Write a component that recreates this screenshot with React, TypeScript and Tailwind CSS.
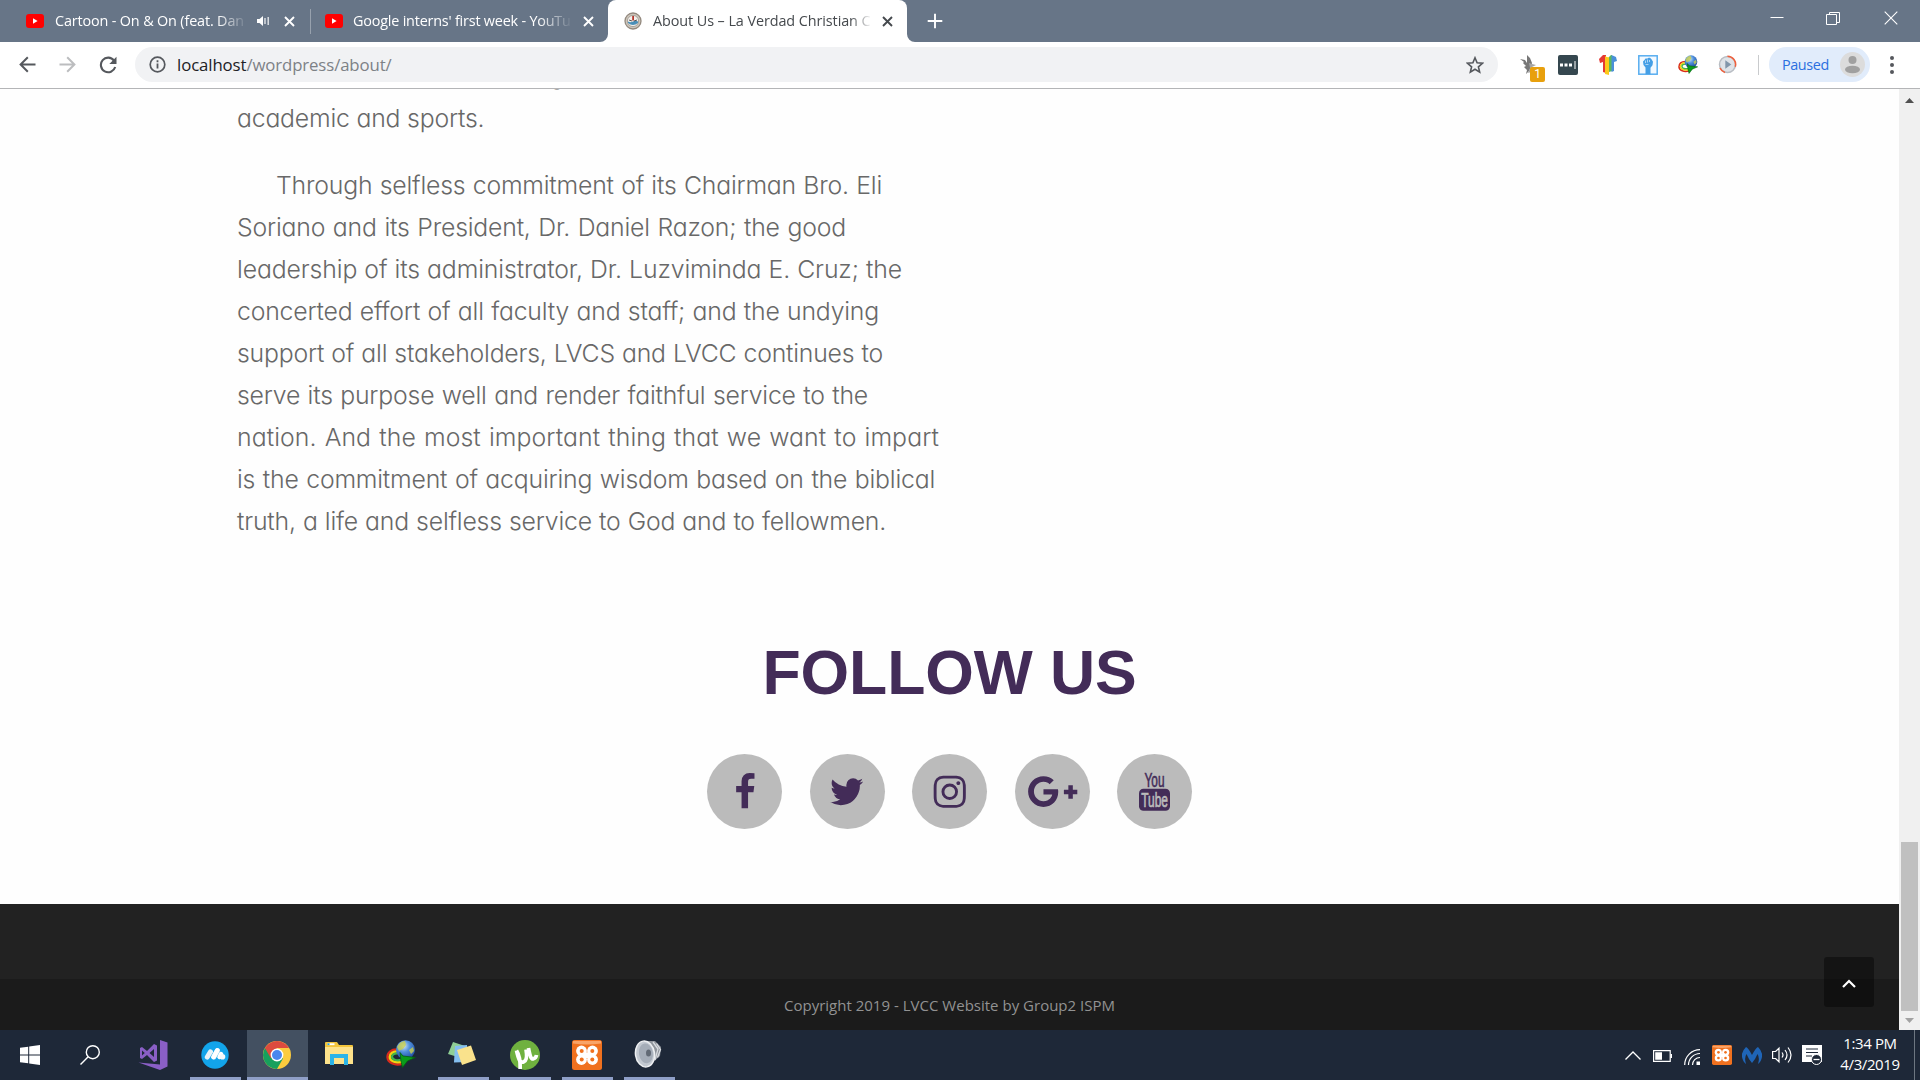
import React from "react";
import { FaGooglePlusG } from "react-icons/fa";

const UI = "font-['Open_Sans','Noto_Sans',sans-serif]";

const YouTubeMark = () => (
  <svg className="h-[14px] w-[18px] shrink-0" viewBox="0 0 18 14">
    <rect width="18" height="14" rx="3" fill="#f00" />
    <path d="M7 4.2v5.6L11.6 7z" fill="#fff" />
  </svg>
);

const TabClose = ({ className }: { className: string }) => (
  <svg className={`h-[11px] w-[11px] shrink-0 ${className}`} viewBox="0 0 11 11">
    <path d="M1 1l9 9M10 1l-9 9" stroke="currentColor" strokeWidth="1.9" />
  </svg>
);

function TabStrip() {
  return (
    <div className={`flex h-[42px] bg-[#677587] text-[14.4px] ${UI}`}>
      <div className="flex h-[42px] w-[310px] items-center pl-[26px]">
        <YouTubeMark />
        <div className="ml-[11px] w-[193px] overflow-hidden whitespace-nowrap tracking-[-0.15px] text-white [mask-image:linear-gradient(to_right,#000_84%,transparent)]">
          Cartoon - On &amp; On (feat. Dan
        </div>
        <svg className="ml-[9px] h-[12px] w-[13px] shrink-0 text-white" viewBox="0 0 13 12">
          <path d="M0 4h2.5L6 1v10L2.5 8H0z" fill="currentColor" />
          <path d="M8 3v6M11.2 2v8" stroke="currentColor" strokeWidth="1.4" opacity=".8" />
        </svg>
        <TabClose className="ml-[14px] text-white" />
      </div>
      <div className="mt-[9px] h-[25px] w-px bg-[#97a1ad]" />
      <div className="flex h-[42px] w-[297px] items-center pl-[14px]">
        <YouTubeMark />
        <div className="ml-[10px] w-[220px] overflow-hidden whitespace-nowrap tracking-[-0.2px] text-white [mask-image:linear-gradient(to_right,#000_84%,transparent)]">
          Google interns&#39; first week - YouTu
        </div>
        <TabClose className="ml-[10px] text-white" />
      </div>
      <div className="relative flex h-[42px] w-[299px] rounded-t-[8px] bg-white">
        <svg className="absolute -left-[8px] bottom-0 h-[8px] w-[8px]" viewBox="0 0 8 8">
          <path d="M8 0v8H0a8 8 0 0 0 8-8z" fill="#fff" />
        </svg>
        <svg className="absolute -right-[8px] bottom-0 h-[8px] w-[8px]" viewBox="0 0 8 8">
          <path d="M0 0v8h8a8 8 0 0 1-8-8z" fill="#fff" />
        </svg>
        <div className="flex h-[42px] items-center pl-[16px]">
          <svg className="h-[18px] w-[18px] shrink-0" viewBox="0 0 18 18">
            <circle cx="9" cy="9" r="8" fill="#cdc6bc" stroke="#93897e" strokeWidth="1.300" />
            <circle cx="9" cy="9" r="5.600" fill="#f3f0ec" stroke="#9a948c" strokeWidth=".8" />
            <path d="M4 9.500q2.500 1.500 5 0t5 0v1.500q-5 4-10 0z" fill="#4a8fb8" />
            <path d="M8.200 4h1.800v4.500H8.200z" fill="#b5372e" />
            <path d="M5 8l3 1M13 8l-3 1" stroke="#555" />
          </svg>
          <div className="ml-[11px] w-[219px] overflow-hidden whitespace-nowrap tracking-[-0.08px] text-[#45494d] [mask-image:linear-gradient(to_right,#000_90%,transparent)]">
            About Us – La Verdad Christian C
          </div>
          <TabClose className="ml-[10px] text-[#45494d]" />
        </div>
      </div>
      <svg className="ml-[20px] mt-[13px] h-[16px] w-[16px] text-white" viewBox="0 0 16 16">
        <path d="M8 .7v14.600M.7 8h14.600" stroke="currentColor" strokeWidth="1.900" />
      </svg>
      <div className="ml-auto flex pt-[11px] pr-[22px] text-white">
        <svg className="h-[14px] w-[14px]" viewBox="0 0 14 14">
          <path d="M.5 6.500h13" stroke="currentColor" />
        </svg>
        <svg className="ml-[42px] h-[14px] w-[14px]" viewBox="0 0 14 14">
          <path d="M.5 3.500h10v10H.5zM3.500 3V1.500h10v10h-3" fill="none" stroke="currentColor" />
        </svg>
        <svg className="ml-[44px] h-[14px] w-[14px]" viewBox="0 0 14 14">
          <path d="M.7 .7l12.600 12.600M13.300 .7L.7 13.300" stroke="currentColor" strokeWidth="1.100" />
        </svg>
      </div>
    </div>
  );
}

const IdmIcon = ({ className }: { className: string }) => (
  <svg className={className} viewBox="0 0 30 28">
    <defs>
      <radialGradient id="globe" cx=".4" cy=".3" r=".8">
        <stop offset="0" stopColor="#cfe4f5" />
        <stop offset=".4" stopColor="#4f8fdb" />
        <stop offset="1" stopColor="#173f94" />
      </radialGradient>
    </defs>
    <path d="M12 9.500C5 9 1.200 13 1.500 17.500 2 23 9 26 17 23.500" fill="none" stroke="#d92a1c" strokeWidth="2.400" />
    <path d="M12 11.500C6.500 11 3.500 14 3.700 17 4 21.500 10 23.500 17 21.300" fill="none" stroke="#f5d312" strokeWidth="2.400" />
    <path d="M12 13.500C8 13 5.800 15 6 17c.5 3 5 4.300 10 2.500" fill="none" stroke="#43b649" strokeWidth="2.200" />
    <circle cx="19.500" cy="9.800" r="9.500" fill="url(#globe)" />
    <path d="M11 7q3-6 8-6l1 4-3 4-4 2zM23 10l4-3 1 4-3 3z" fill="#c9cf4e" opacity=".8" />
    <path d="M14 12.500l3 3.500 12.500 1.500-8 3.500-5 6.500-1.500-6z" fill="#0a9c1b" stroke="#075c10" strokeWidth=".8" />
  </svg>
);

function Toolbar() {
  return (
    <div className="flex h-[47px] items-start border-b border-[#b4b5b7] bg-white pt-[5px]">
      <div className="flex h-[35px] items-center pl-[19px]">
        <svg className="h-[17px] w-[17px]" viewBox="0 0 17 17" fill="none" stroke="#55585d" strokeWidth="2">
          <path d="M16.500 8.500H2M8.800 1.300L1.600 8.500l7.200 7.200" />
        </svg>
        <svg className="ml-[23px] h-[17px] w-[17px]" viewBox="0 0 17 17" fill="none" stroke="#bcbdbf" strokeWidth="2">
          <path d="M.5 8.500H15M8.200 1.300l7.200 7.200-7.200 7.200" />
        </svg>
        <svg className="ml-[23px] h-[18px] w-[18px]" viewBox="0 0 18 18">
          <path d="M15 4.500A7.300 7.300 0 1 0 16.200 11" fill="none" stroke="#55585d" strokeWidth="2.100" />
          <path d="M17.500 .8v7.200h-7.200z" fill="#55585d" />
        </svg>
      </div>
      <div className={`ml-[18px] flex h-[35px] w-[1363px] items-center rounded-full bg-[#f1f2f4] pl-[14px] pr-[14px] text-[16.8px] ${UI}`}>
        <svg className="h-[17px] w-[17px]" viewBox="0 0 17 17">
          <circle cx="8.500" cy="8.500" r="7.300" fill="none" stroke="#55585d" strokeWidth="1.700" />
          <path d="M7.600 7.600h1.800v5H7.600zM7.600 4.300h1.800v1.900H7.600z" fill="#55585d" />
        </svg>
        <span className="ml-[11px] tracking-[-0.1px] text-[#202124]">localhost</span>
        <span className="tracking-[-0.12px] text-[#7d8186]">/wordpress/about/</span>
        <svg className="ml-auto h-[18px] w-[18px]" viewBox="0 0 18 18">
          <path d="M9 1.800l2.100 5 5.400.45-4.100 3.550 1.250 5.300L9 13.300l-4.650 2.800 1.250-5.300L1.500 7.250l5.400-.45z" fill="none" stroke="#55585d" strokeWidth="1.600" />
        </svg>
      </div>
      <div className="flex h-[35px] items-center pl-[22px]">
        <div className="relative h-[20px] w-[26px]">
          <svg className="h-[20px] w-[20px]" viewBox="0 0 20 20">
            <path d="M0 4l5 1 2 3V0l3 3 2 5-1 4-2 4-3 3 1-4-3-3 2-1-3-3 1-1z" fill="#777" />
            <path d="M9 8l3 1 4 1-4 2-1 5-3 1 2-5z" fill="#a5a5a5" />
          </svg>
          <div className="absolute left-[10px] top-[12px] flex h-[15px] w-[15px] items-center justify-center rounded-[2px] bg-[#e8a00d] font-['Roboto',sans-serif] text-[12px] text-white">
            1
          </div>
        </div>
        <svg className="ml-[12px] h-[20px] w-[20px]" viewBox="0 0 20 20">
          <rect width="20" height="20" rx="2" fill="#35474f" />
          <path d="M2 8.500h3v3H2zM6.500 8.500h3v3h-3zM11 8.500h3v3h-3zM16.500 6h1v8h-1z" fill="#fff" />
        </svg>
        <svg className="ml-[21px] h-[20px] w-[18px]" viewBox="0 0 18 20">
          <path d="M4 0h3v18l-3-1V7L1 8 0 4z" fill="#e53935" />
          <path d="M6 1q3 2 4 1v18l-4-1z" fill="#fdc91b" />
          <path d="M10 2l2-2h1v16l-3 1z" fill="#5cb85c" />
          <path d="M12.500 0L17 2l1 4-3 1v9l-2.500 1z" fill="#4a90d9" />
        </svg>
        <svg className="ml-[21px] h-[20px] w-[20px]" viewBox="0 0 20 20">
          <rect x=".8" y=".8" width="18.400" height="18.400" fill="#f2f9ff" stroke="#58aef0" strokeWidth="1.500" />
          <path d="M5 6.500l1.500-1.500 1-1.500h2l1-.8h1.500l1.500 1.500 1.500 2.500-.5 3.500-2 2.500v6.500H7.500V12.500L5.500 10z" fill="#459fe6" />
          <path d="M7.500 5.500v2.500M9.500 4.500v3M11.500 5v2M7.500 9.500h3" fill="none" stroke="#d7ecfc" strokeWidth=".7" />
        </svg>
        <IdmIcon className="ml-[20px] h-[19px] w-[20px]" />
        <svg className="ml-[20px] h-[19px] w-[19px]" viewBox="0 0 19 19">
          <circle cx="9.500" cy="9.500" r="8" fill="#dfe3e8" stroke="#b9bec4" strokeWidth="1.500" />
          <path d="M9.500 1.200a8.300 8.300 0 0 1 7.800 10.500M2 13a8.300 8.300 0 0 0 5 4.500" fill="none" stroke="#f0603c" strokeWidth="1.500" />
          <path d="M7.300 5.300v8.400l6-4.200z" fill="#8296aa" />
        </svg>
        <div className="ml-[21px] h-[20px] w-px bg-[#c9cbcd]" />
      </div>
      <div className={`ml-[10px] flex h-[35px] w-[101px] items-center justify-between rounded-full bg-[#e1ecfb] pl-[13px] pr-[5px] text-[14.4px] text-[#2b6fe0] ${UI}`}>
        <span className="tracking-[-0.4px]">Paused</span>
        <svg className="h-[25px] w-[25px]" viewBox="0 0 25 25">
          <circle cx="12.500" cy="12.500" r="12.500" fill="#dcdcdc" />
          <circle cx="12.500" cy="8" r="4" fill="#a0a0a0" />
          <ellipse cx="12.500" cy="17.500" rx="7.500" ry="3.800" fill="#a0a0a0" />
        </svg>
      </div>
      <div className="ml-[20px] mt-[9px] flex flex-col gap-[3px]">
        <i className="h-[4px] w-[4px] rounded-full bg-[#55585d]" />
        <i className="h-[4px] w-[4px] rounded-full bg-[#55585d]" />
        <i className="h-[4px] w-[4px] rounded-full bg-[#55585d]" />
      </div>
    </div>
  );
}

const LINE = "h-[42px] whitespace-nowrap [text-align-last:justify]";

function Article() {
  return (
    <div className="pl-[237px] font-['Inter','Lato',sans-serif] text-[24.8px] leading-[42px] font-light tracking-[-0.2px] text-[#686868] [font-feature-settings:'cv11']">
      <div className="-mt-[35px] flex h-[42px]">
        <span className="ml-[229px]">y</span>
        <span className="ml-[70px]">g</span>
      </div>
      <p className={`mt-[1px] w-[247px] ${LINE}`}>academic and sports.</p>
      <div className="mt-[25px]">
        <p className={`ml-[39px] w-[606px] ${LINE}`}>Through selfless commitment of its Chairman Bro. Eli</p>
        <p className={`w-[609px] ${LINE}`}>Soriano and its President, Dr. Daniel Razon; the good</p>
        <p className={`w-[665px] tracking-[-0.12px] ${LINE}`}>leadership of its administrator, Dr. Luzviminda E. Cruz; the</p>
        <p className={`w-[642px] ${LINE}`}>concerted effort of all faculty and staff; and the undying</p>
        <p className={`w-[646px] ${LINE}`}>support of all stakeholders, LVCS and LVCC continues to</p>
        <p className={`w-[631px] ${LINE}`}>serve its purpose well and render faithful service to the</p>
        <p className={`w-[702px] tracking-[0.08px] ${LINE}`}>nation. And the most important thing that we want to impart</p>
        <p className={`w-[698px] ${LINE}`}>is the commitment of acquiring wisdom based on the biblical</p>
        <p className={`w-[649px] ${LINE}`}>truth, a life and selfless service to God and to fellowmen.</p>
      </div>
    </div>
  );
}

const FacebookGlyph = () => (
  <svg className="h-[38px] w-[38px]" viewBox="0 0 1792 1792" fill="currentColor">
    <path d="M1343 12v264h-157q-86 0-116 36t-30 108v189h293l-39 296h-254v759h-306v-759h-255v-296h255v-218q0-186 104-288.500t277-102.500q147 0 228 12z" />
  </svg>
);

const TwitterGlyph = () => (
  <svg className="h-[37.5px] w-[37.5px]" viewBox="0 0 1792 1792" fill="currentColor">
    <path d="M1684 408q-67 98-162 167 1 14 1 42 0 130-38 259.500t-115.500 248.500-184.500 210.500-258 146-323 54.500q-271 0-496-145 35 4 78 4 225 0 401-138-105-2-188-64.500t-114-159.500q33 5 61 5 43 0 85-11-112-23-185.500-111.500t-73.500-205.500v-4q68 38 146 41-66-44-105-115t-39-154q0-88 44-163 121 149 294.500 238.500t371.500 99.500q-8-38-8-74 0-134 94.500-228.500t228.500-94.500q140 0 236 102 109-21 205-78-37 115-142 178 93-10 186-50z" />
  </svg>
);

const InstagramGlyph = () => (
  <svg className="h-[37.5px] w-[37.5px]" viewBox="0 0 1792 1792" fill="currentColor">
    <path d="M1152 896q0-106-75-181t-181-75-181 75-75 181 75 181 181 75 181-75 75-181zm138 0q0 164-115 279t-279 115-279-115-115-279 115-279 279-115 279 115 115 279zm108-410q0 38-27 65t-65 27-65-27-27-65 27-65 65-27 65 27 27 65zm-502-220q-7 0-76.500-.5t-105.500 0-96.500 3-103 10-71.500 18.500q-50 20-88 58t-58 88q-11 29-18.500 71.500t-10 103-3 96.500 0 105.500.5 76.500-.5 76.500 0 105.500 3 96.500 10 103 18.500 71.500q20 50 58 88t88 58q29 11 71.500 18.500t103 10 96.500 3 105.500 0 76.500-.5 76.500.5 105.500 0 96.500-3 103-10 71.500-18.500q50-20 88-58t58-88q11-29 18.500-71.500t10-103 3-96.500 0-105.500-.5-76.500.5-76.500 0-105.500-3-96.500-10-103-18.500-71.500q-20-50-58-88t-88-58q-29-11-71.500-18.500t-103-10-96.500-3-105.500 0-76.500.5zm768 630q0 229-5 317-10 208-124 322t-322 124q-88 5-317 5t-317-5q-208-10-322-124t-124-322q-5-88-5-317t5-317q10-208 124-322t322-124q88-5 317-5t317 5q208 10 322 124t124 322q5 88 5 317z" />
  </svg>
);

const YouTubeGlyph = () => (
  <svg className="h-[39px] w-[31px] overflow-visible font-['Liberation_Sans_Narrow','Liberation_Sans',sans-serif]" viewBox="0 0 31 39">
    <text x="5.500" y="14.800" fontSize="20" textLength="20" lengthAdjust="spacingAndGlyphs" fill="#432c58" stroke="#432c58" strokeWidth=".6">You</text>
    <rect x="0" y="16.700" width="31" height="22" rx="4.500" fill="#432c58" />
    <text x="2.200" y="35" fontSize="20" textLength="26.800" lengthAdjust="spacingAndGlyphs" fill="#bbb" stroke="#bbb" strokeWidth=".7">Tube</text>
  </svg>
);

const Circle = ({ children }: { children: React.ReactNode }) => (
  <div className="flex h-[75px] w-[75px] items-center justify-center rounded-full bg-[#bbbbbb] text-[#432c58]">{children}</div>
);

function FollowUs() {
  return (
    <div className="flex w-[1899px] flex-col items-center">
      <h2 className="mt-[93px] w-[380px] text-center font-['Liberation_Sans',sans-serif] text-[62.5px] leading-[75px] font-bold tracking-[-0.1px] whitespace-nowrap text-[#432c58]">
        FOLLOW US
      </h2>
      <div className="mt-[44px] flex gap-[27.5px]">
        <Circle><FacebookGlyph /></Circle>
        <Circle><TwitterGlyph /></Circle>
        <Circle><InstagramGlyph /></Circle>
        <Circle><FaGooglePlusG className="ml-[1px] h-[41px] w-[51.4px]" /></Circle>
        <Circle><YouTubeGlyph /></Circle>
      </div>
    </div>
  );
}

function Scrollbar() {
  return (
    <div className="flex w-[21px] flex-col items-center bg-[#f0f0f0]">
      <svg className="mt-[9px] h-[5px] w-[9px]" viewBox="0 0 9 5">
        <path d="M0 5l4.500-5L9 5z" fill="#505050" />
      </svg>
      <div className="mt-[739px] h-[169px] w-[17px] bg-[#c0c0c0]" />
      <svg className="mt-[7px] h-[5px] w-[9px]" viewBox="0 0 9 5">
        <path d="M0 0l4.500 5L9 0z" fill="#a2a2a2" />
      </svg>
    </div>
  );
}

function Page() {
  return (
    <div className="flex h-[941px]">
      <main className="relative flex w-[1899px] flex-col overflow-hidden bg-[#fefefe]">
        <div className="h-[815px] shrink-0">
          <Article />
          <FollowUs />
        </div>
        <footer className="flex flex-col">
          <div className="h-[75px] bg-[#222222]" />
          <div className="flex h-[51px] justify-center bg-[#1b1b1b] pt-[14px]">
            <span className={`w-[331px] text-[15px] leading-[24px] whitespace-nowrap text-[#929292] [text-align-last:justify] ${UI}`}>
              Copyright 2019 - LVCC Website by Group2 ISPM
            </span>
          </div>
        </footer>
        <div className="absolute right-[25px] bottom-[23px] flex h-[50px] w-[50px] items-center justify-center rounded-[3px] bg-black/40">
          <svg className="mt-[2px] h-[9px] w-[14px]" viewBox="0 0 14 9">
            <path d="M1 8l6-6 6 6" fill="none" stroke="#fff" strokeWidth="2.200" />
          </svg>
        </div>
      </main>
      <Scrollbar />
    </div>
  );
}

const XamppIcon = ({ className }: { className: string }) => (
  <svg className={className} viewBox="0 0 30 30">
    <rect width="30" height="30" rx="2.500" fill="#f0711f" />
    <path d="M1 1h28v2.500q-14 2-28 0z" fill="#f9a468" />
    <g fill="#fff">
      <circle cx="9.500" cy="11" r="5.400" />
      <circle cx="20.500" cy="11" r="5.400" />
      <circle cx="9.500" cy="19.500" r="5.400" />
      <circle cx="20.500" cy="19.500" r="5.400" />
      <rect x="7" y="12.500" width="16" height="5.500" />
    </g>
    <g fill="#f0711f">
      <circle cx="9.700" cy="11" r="2" />
      <circle cx="20.300" cy="11" r="2" />
      <circle cx="9.700" cy="19.500" r="2" />
      <circle cx="20.300" cy="19.500" r="2" />
    </g>
  </svg>
);

const TaskCell = ({ active, running, children }: { active?: boolean; running?: boolean; children?: React.ReactNode }) => (
  <div className="flex w-[62px] flex-col">
    <div className={`flex h-[50px] w-[61px] flex-col items-center ${active ? "bg-[#435061]" : ""}`}>
      <div className="flex h-[47px] items-center pt-[3px] pr-[1px]">{children}</div>
      <div className={`h-[3px] ${active ? "w-[61px]" : "w-[51px]"} ${active || running ? "bg-[#8f9fc7]" : ""}`} />
    </div>
  </div>
);

function Taskbar() {
  return (
    <div className="flex h-[50px] bg-[#1e2838]">
      <div className="flex w-[60px] items-center justify-center">
        <svg className="h-[20px] w-[20px]" viewBox="0 0 20 20" fill="#fff">
          <path d="M0 2.800L8.200 1.700v7.700H0zM9.200 1.500L20 0v9.400H9.200zM0 10.400h8.200v7.900L0 17.200zM9.200 10.400H20V20L9.200 18.500z" />
        </svg>
      </div>
      <div className="flex w-[62px] items-center pl-[20px]">
        <svg className="h-[20px] w-[20px]" viewBox="0 0 20 20" fill="none" stroke="#fff" strokeWidth="1.400">
          <circle cx="12.800" cy="7.200" r="6.500" />
          <path d="M8.200 11.800L.5 19.500" />
        </svg>
      </div>
      <TaskCell>
        <svg className="ml-[2px] h-[30px] w-[30px]" viewBox="0 0 30 30">
          <path d="M22 0l7.500 2.500v24L22 30 .5 22.500 22 24.500z" fill="#8a5fc6" />
          <path d="M2 8l2-1 5 4 7-7 3 1.500v15L16 22l-7-7-5 4-2-1zM4 10.500v5L6.800 13zM16 9l-4.500 4 4.500 4z" fill="#8a5fc6" fillRule="evenodd" />
        </svg>
      </TaskCell>
      <div className="w-px" />
      <TaskCell running>
        <svg className="h-[28px] w-[28px]" viewBox="0 0 28 28">
          <circle cx="14" cy="14" r="13.700" fill="#12a4ea" />
          <path d="M6.300 16L9.500 10.800M12.800 16l3.600-6.500" stroke="#e9f3f8" strokeWidth="5" strokeLinecap="round" />
          <path d="M12.500 16l3.700-6.500M18.500 16l1.500-3" stroke="#fff" strokeWidth="4.500" strokeLinecap="round" />
          <circle cx="21.500" cy="15.800" r="2.800" fill="#f3f8fb" />
        </svg>
      </TaskCell>
      <TaskCell active>
        <svg className="h-[28px] w-[28px]" viewBox="0 0 28 28">
          <circle cx="14" cy="14" r="14" fill="#fccc3e" />
          <path d="M14 14L1.900 7A14 14 0 0 0 14 28l6-10.500z" fill="#17a05d" />
          <path d="M1.900 7A14 14 0 0 1 26.100 7H14L8 17.500z" fill="#dc4b3e" />
          <circle cx="14" cy="14" r="6.400" fill="#fff" />
          <circle cx="14" cy="14" r="5" fill="#4a87ee" />
        </svg>
      </TaskCell>
      <TaskCell>
        <svg className="-mt-[2px] h-[24px] w-[28px]" viewBox="0 0 28 24">
          <path d="M0 1q0-1 1-1h11l2 3h13q1 0 1 1v18H0z" fill="#f3c53c" />
          <path d="M0 5h28v17H0z" fill="#fde28b" />
          <path d="M2.500 1.300h7v1.800h-7z" fill="#fff" />
          <path d="M2.500 1.300h2v1.800h-2z" fill="#27a0dd" />
          <path d="M5 12h18v11h-4v-7H9v7H5z" fill="#2bb4e8" />
        </svg>
      </TaskCell>
      <TaskCell>
        <IdmIcon className="-mt-[3px] h-[28px] w-[30px]" />
      </TaskCell>
      <TaskCell running>
        <svg className="-mt-[2px] mr-[2px] h-[26px] w-[30px]" viewBox="0 0 30 26">
          <path d="M6 1l12 4-4 12L1 13z" fill="#8fcf95" />
          <path d="M8 5l12-1v17l-13 .5z" fill="#85bff0" />
          <path d="M10 9l14-4.500 5 14.500-14 5z" fill="#fae28c" />
        </svg>
      </TaskCell>
      <TaskCell running>
        <svg className="h-[30px] w-[30px]" viewBox="0 0 30 30">
          <circle cx="15" cy="15" r="15" fill="#6fb13f" />
          <path d="M6.500 10.500q4 6 3.700 18.500M6.500 10.500c2 10 4 12.500 7 11.500s4-4 2.500-12.500M18.500 8c1.500 8 2.500 11.500 5 10.800s2.700-2 3-3.800" fill="none" stroke="#fff" strokeWidth="3.700" />
        </svg>
      </TaskCell>
      <TaskCell running>
        <XamppIcon className="h-[30px] w-[30px]" />
      </TaskCell>
      <TaskCell running>
        <svg className="-mt-[2px] mr-[2px] h-[28px] w-[28px]" viewBox="0 0 28 28">
          <path d="M14 1h7l6 6-1 9-10 9z" fill="#8f949b" />
          <path d="M19 2l5 7-3 11M22.500 3.500l4 6-3 8" fill="none" stroke="#d9dce0" strokeWidth="1.300" />
          <ellipse cx="11" cy="14" rx="9.500" ry="13" fill="#c3c9d1" stroke="#eef0f2" strokeWidth="1.500" transform="rotate(-8 11 14)" />
          <ellipse cx="12" cy="13.500" rx="7" ry="10" fill="#a5adb8" transform="rotate(-8 11 14)" />
          <ellipse cx="14.500" cy="13" rx="2.500" ry="3.500" fill="#626a75" />
        </svg>
      </TaskCell>
      <div className="ml-auto flex h-[50px] items-center">
        <svg className="h-[9px] w-[16px]" viewBox="0 0 16 9">
          <path d="M.5 8.500L8 1l7.500 7.500" fill="none" stroke="#fff" strokeWidth="1.300" />
        </svg>
        <svg className="ml-[12px] mt-[1px] h-[12px] w-[19px]" viewBox="0 0 19 12">
          <path d="M.6 .6h16.600v10.800H.6z" fill="none" stroke="#fff" strokeWidth="1.200" />
          <path d="M2.200 2.200H9v7.600H2.200zM17.500 4H19v4h-1.500z" fill="#fff" />
        </svg>
        <svg className="ml-[12px] mt-[3px] h-[16px] w-[16px]" viewBox="0 0 16 16" fill="none" stroke="#fff" strokeWidth="1.200">
          <path d="M.7 16A15.300 15.300 0 0 1 16 .7M4.500 16A11.500 11.500 0 0 1 16 4.500M8.500 16A7.500 7.500 0 0 1 16 8.500" />
          <path d="M12.500 12.500H16V16h-3.500z" fill="#fff" stroke="none" />
        </svg>
        <XamppIcon className="ml-[12px] h-[20px] w-[20px]" />
        <svg className="ml-[10px] h-[17px] w-[20px]" viewBox="0 0 20 17">
          <path d="M4 0q2 .5 6 8 4-7.500 6-8 5 5 4 10-1 5-4 7 2-6-.5-10-2 5-5.500 9-3.500-4-5.500-9Q2 11 4 17 1 15 0 10-1 5 4 0z" fill="#1f65b7" />
        </svg>
        <svg className="ml-[10px] h-[18px] w-[20px]" viewBox="0 0 20 18" fill="none" stroke="#fff" strokeWidth="1.200">
          <path d="M.6 5.500h3L7 2.200v13.600L3.600 12.500h-3zM10 6.500q2 2.500 0 5M13 4q4 5 0 10M16 1.500q6 7.500 0 15" />
        </svg>
        <svg className="ml-[10px] h-[20px] w-[20px]" viewBox="0 0 20 20">
          <path d="M0 0h20v17H0z" fill="#fff" />
          <path d="M4 4h12M4 7.500h12M4 11h6" stroke="#1e2838" strokeWidth="1.200" />
          <circle cx="14.500" cy="14.500" r="5" fill="#1e2838" stroke="#fff" strokeWidth="1" />
          <path d="M11.500 14.500h6" stroke="#fff" strokeWidth="1.300" />
        </svg>
        <div className={`ml-[18px] -mt-[2px] flex w-[60px] flex-col items-center text-[15px] leading-[21px] whitespace-nowrap tracking-[-0.4px] text-white ${UI}`}>
          <span>1:34 PM</span>
          <span>4/3/2019</span>
        </div>
        <div className="ml-[14px] h-[50px] w-[6px] border-l border-[#6d7681]" />
      </div>
    </div>
  );
}

export default function App() {
  return (
    <div className="flex h-[1080px] w-[1920px] flex-col overflow-hidden bg-white">
      <TabStrip />
      <Toolbar />
      <Page />
      <Taskbar />
    </div>
  );
}
